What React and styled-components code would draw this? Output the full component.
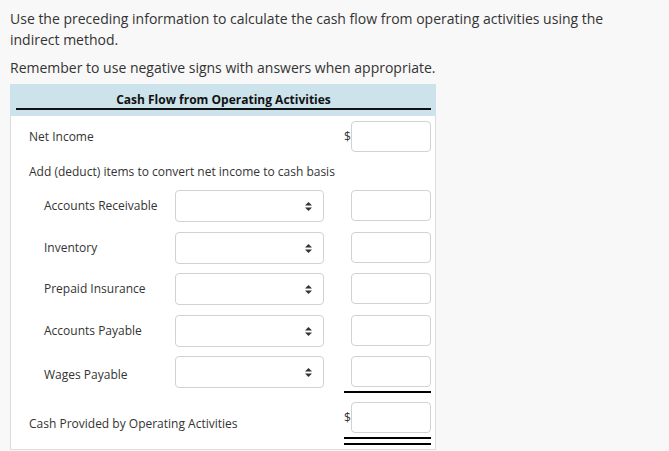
import React from "react";
import styled, { createGlobalStyle } from "styled-components";

const GlobalStyle = createGlobalStyle`
  html, body {
    margin: 0;
    padding: 0;
    background: #f8f8f8;
  }
  body {
    font-family: "Open Sans", "Noto Sans", Arial, sans-serif;
    color: #333;
  }
`;

const Page = styled.div`
  padding: 8px 10px;
  width: 669px;
  box-sizing: border-box;
`;

const Text = styled.p`
  margin: ${(p) => p.$top || 0}px 0 0;
  font-size: 14px;
  line-height: 21px;
  color: #333;
  width: 600px;
`;

const Table = styled.div`
  margin-top: 6px;
  width: 426px;
`;

const Header = styled.div`
  background: #cde3ec;
  padding: 8px 0 6px;
`;

const Title = styled.div`
  margin: 0 5px 0 6px;
  border-bottom: 2px solid #111;
  text-align: center;
  font-weight: 700;
  font-size: 12px;
  line-height: 16px;
  color: #111;
`;

const Body = styled.div`
  background: #fff;
  border: 1px solid #ddd;
  border-top: none;
  padding: 5px 4px 3px 18px;
`;

const Row = styled.div`
  display: grid;
  grid-template-columns: 146px 149px 20px 87px;
  align-items: start;
  margin-top: ${(p) => p.$top || 0}px;
`;

const Label = styled.div`
  grid-column: ${(p) => (p.$wide ? "1 / 4" : "1")};
  font-size: 12px;
  line-height: ${(p) => p.$lh || 31}px;
  padding-left: ${(p) => (p.$indent ? 15 : 0)}px;
  white-space: nowrap;
`;

const Note = styled.div`
  font-size: 12px;
  line-height: 20px;
  margin-top: 10px;
`;

const Select = styled.div`
  grid-column: 2;
  height: 32px;
  box-sizing: border-box;
  border: 1px solid #d2d2d2;
  border-radius: 4px;
  background: #fff;
  display: flex;
  align-items: center;
  justify-content: flex-end;
  padding-right: 11px;
`;

const Amount = styled.div`
  grid-column: 4;
  display: flex;
  flex-direction: column;
  ${(p) => p.$total && "padding-bottom: 4px; border-bottom: 2px solid #000;"}
`;

const AmountLine = styled.div`
  display: flex;
  align-items: center;
  justify-content: flex-end;
`;

const Dollar = styled.span`
  font-size: 12px;
  width: 7px;
  text-align: left;
`;

const Input = styled.div`
  width: 80px;
  height: 31px;
  box-sizing: border-box;
  border: 1px solid #d2d2d2;
  border-radius: 4px;
  background: #fff;
`;

const Rule = styled.div`
  height: 2px;
  background: #000;
  margin-top: 4px;
`;

const Arrows = () => (
  <svg width="7" height="9" viewBox="0 0 7 9">
    <path d="M3.5 0 L7 3.6 H0 Z" fill="#333" />
    <path d="M3.5 9 L7 5.4 H0 Z" fill="#333" />
  </svg>
);

const items = [
  { name: "Accounts Receivable", top: 8 },
  { name: "Inventory", top: 10 },
  { name: "Prepaid Insurance", top: 9 },
  { name: "Accounts Payable", top: 10 },
  { name: "Wages Payable", top: 9, total: true },
];

const App = () => (
  <>
    <GlobalStyle />
    <Page>
      <Text>
        Use the preceding information to calculate the cash flow from operating
        activities using the indirect method.
      </Text>
      <Text $top={7}>Remember to use negative signs with answers when appropriate.</Text>
      <Table>
        <Header>
          <Title>Cash Flow from Operating Activities</Title>
        </Header>
        <Body>
          <Row>
            <Label $wide>Net Income</Label>
            <Amount>
              <AmountLine>
                <Dollar>$</Dollar>
                <Input />
              </AmountLine>
            </Amount>
          </Row>
          <Note>Add (deduct) items to convert net income to cash basis</Note>
          {items.map((it) => (
            <Row key={it.name} $top={it.top}>
              <Label $indent $lh={it.total ? 37 : 31}>
                {it.name}
              </Label>
              <Select>
                <Arrows />
              </Select>
              <Amount $total={it.total}>
                <AmountLine>
                  <Input />
                </AmountLine>
              </Amount>
            </Row>
          ))}
          <Row $top={9}>
            <Label $wide $lh={44}>
              Cash Provided by Operating Activities
            </Label>
            <Amount>
              <AmountLine>
                <Dollar>$</Dollar>
                <Input />
              </AmountLine>
              <Rule />
              <Rule />
            </Amount>
          </Row>
        </Body>
      </Table>
    </Page>
  </>
);

export default App;
